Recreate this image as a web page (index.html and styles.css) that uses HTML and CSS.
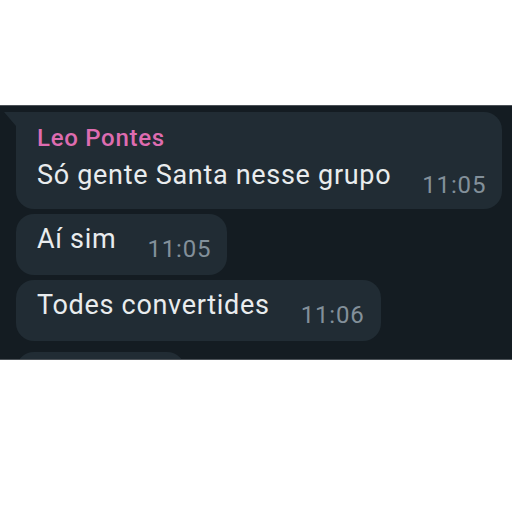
FILE: index.html
```html
<!DOCTYPE html>
<html lang="pt">
<head>
  <meta charset="UTF-8" />
  <meta name="viewport" content="width=device-width, initial-scale=1.0"/>
  <title>Chat</title>
  <link rel="stylesheet" href="styles.css">
</head>
<body>

  <div class="chat">
    <div class="bubble first">
      <div class="author">Leo Pontes</div>
      <div class="row">
        <span class="text">Só gente Santa nesse grupo</span>
        <span class="time">11:05</span>
      </div>
    </div>

    <div class="bubble">
      <div class="row">
        <span class="text">Aí sim</span>
        <span class="time">11:05</span>
      </div>
    </div>

    <div class="bubble">
      <div class="row">
        <span class="text">Todes convertides</span>
        <span class="time">11:06</span>
      </div>
    </div>

    <div class="bubble cut"></div>
  </div>

</body>
</html>
```

FILE: styles.css
```css
body {
  margin: 0;
  background: #ffffff;
  font-family: Roboto, "Noto Sans", sans-serif;
}

.chat {
  box-sizing: border-box;
  margin-top: 105px;
  height: 255px;
  background-color: #141c22;
  border-top: 1px solid #4b5157;
  border-bottom: 1px solid #4b5157;
  overflow: hidden;
  display: flex;
  flex-direction: column;
  align-items: flex-start;
  gap: 5px;
  padding: 6px 0 0 16px;
}

.bubble {
  position: relative;
  flex-shrink: 0;
  background-color: #212c34;
  border-radius: 18px;
  padding: 10px 16px 14px 21px;
}

.bubble.first {
  border-top-left-radius: 0;
  padding-bottom: 12px;
}

/* little tail on the first message */
.bubble.first::before {
  content: "";
  position: absolute;
  top: 0;
  left: -12px;
  border-top: 14px solid #212c34;
  border-left: 12px solid transparent;
}

.author {
  color: #de6cb0;
  font-size: 24px;
  font-weight: 500;
  letter-spacing: 0.7px;
  line-height: 32px;
  margin-bottom: 6px;
}

.row {
  display: flex;
  align-items: flex-start;
}

.text {
  color: #e9ecee;
  font-size: 27px;
  letter-spacing: 0.7px;
  line-height: 30px;
}

.time {
  color: #83909a;
  font-size: 24px;
  letter-spacing: 0.85px;
  line-height: 24px;
  margin-left: 31px;
  margin-top: 13px;
}

.bubble.cut {
  width: 132px;
  height: 50px;
  margin-top: 6px;
}
```
